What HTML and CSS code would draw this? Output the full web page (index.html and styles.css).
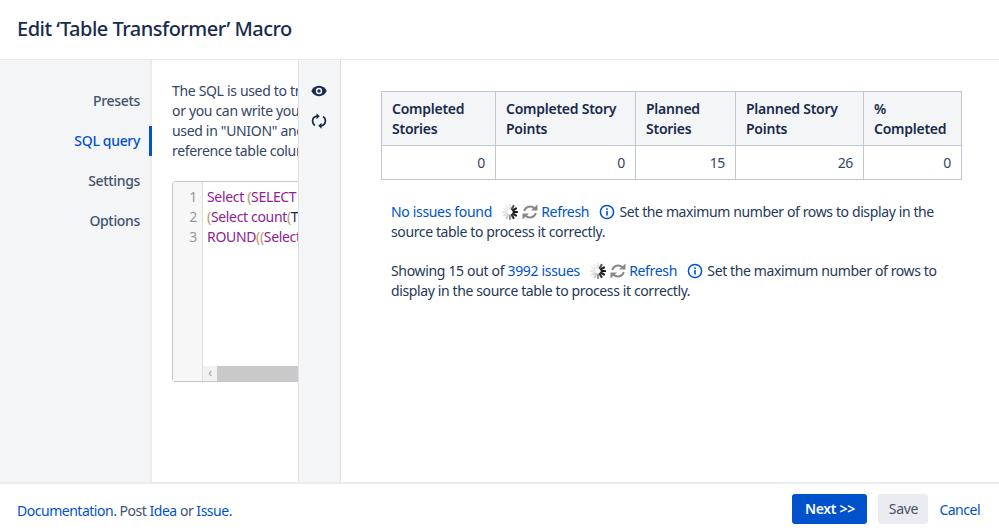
FILE: index.html
```html
<!DOCTYPE html>
<html lang="en">
<head>
<meta charset="utf-8">
<title>Edit Table Transformer Macro</title>
<link rel="stylesheet" href="styles.css">
</head>
<body>
<svg class="defs" width="0" height="0" aria-hidden="true">
  <symbol id="spin" viewBox="0 0 16 16">
    <g stroke-width="2.200" stroke-linecap="round" fill="none">
      <path d="M8 1v3.400" stroke="#e6e6e6"/>
      <path d="M11.500 2l-1.700 3" stroke="#555"/>
      <path d="M14 4.500l-3 1.700" stroke="#222"/>
      <path d="M15 8h-3.400" stroke="#111"/>
      <path d="M14 11.500l-3-1.700" stroke="#222"/>
      <path d="M11.500 14l-1.700-3" stroke="#333"/>
      <path d="M8 15v-3.400" stroke="#999"/>
      <path d="M4.500 14l1.700-3" stroke="#ccc"/>
      <path d="M2 11.500l3-1.700" stroke="#ddd"/>
      <path d="M1 8h3.400" stroke="#e6e6e6"/>
      <path d="M2 4.500l3 1.700" stroke="#eaeaea"/>
      <path d="M4.500 2l1.700 3" stroke="#eee"/>
    </g>
  </symbol>
  <symbol id="refresh" viewBox="0 0 16 16">
    <g fill="none" stroke="#888" stroke-width="2">
      <path d="M12.500 4.500A6 6 0 0 0 2.200 7"/>
      <path d="M3.500 11.500A6 6 0 0 0 13.800 9"/>
    </g>
    <path d="M9 6.500h6.500V0.500z" fill="#888"/>
    <path d="M7 9.500H0.500v6z" fill="#888"/>
  </symbol>
  <symbol id="info" viewBox="0 0 16 16">
    <circle cx="8" cy="8" r="6.600" fill="none" stroke="#0052cc" stroke-width="1.500"/>
    <rect x="7.200" y="7" width="1.600" height="4.600" fill="#0052cc"/>
    <rect x="7.200" y="4.300" width="1.600" height="1.600" fill="#0052cc"/>
  </symbol>
</svg>
<header class="top"><h1 class="title">Edit ‘Table Transformer’ Macro</h1></header>
<div class="middle">
  <nav class="side">
    <a class="tab">Presets</a>
    <a class="tab active">SQL query</a>
    <a class="tab">Settings</a>
    <a class="tab">Options</a>
  </nav>
  <section class="editor">
    <div class="desc">
      <div>The SQL is used to transform the source tables,</div>
      <div>or you can write your own query. Columns must be</div>
      <div>used in "UNION" and other statements. You can</div>
      <div>reference table columns by name.</div>
    </div>
    <div class="code">
      <div class="gutter"><div>1</div><div>2</div><div>3</div></div>
      <div class="lines">
        <div class="ln"><span class="kw">Select</span> <span class="br">(</span><span class="kw">SELECT count(T1.'Key')</span></div>
        <div class="ln"><span class="br">(</span><span class="kw">Select count</span><span class="br">(</span><span class="tx">T1.'Story Points')</span></div>
        <div class="ln"><span class="kw">ROUND</span><span class="br">((</span><span class="kw">Select count</span></div>
      </div>
      <div class="hscroll"><span class="arrow">‹</span><span class="thumb"></span></div>
    </div>
  </section>
  <aside class="tools">
    <svg class="tool" width="16" height="12" viewBox="0 0 16 12"><path d="M8 .8C4.500.8 1.600 3 .3 6c1.300 3 4.200 5.200 7.700 5.200s6.400-2.200 7.700-5.200C14.400 3 11.500.8 8 .8z" fill="#172b4d"/><circle cx="8" cy="6" r="3.200" fill="#f4f5f7"/><circle cx="8" cy="6" r="1.700" fill="#172b4d"/></svg>
    <svg class="tool" width="16" height="16" viewBox="0 0 16 16"><g fill="none" stroke="#172b4d" stroke-width="1.700"><path d="M6 3.200C3.500 3.600 1.600 5.700 1.600 8.200c0 1.800.9 3.300 2.300 4.300"/><path d="M10 12.800c2.500-.4 4.400-2.500 4.400-5 0-1.800-.9-3.300-2.300-4.300"/></g><path d="M5.500 0.300l3.300 3-3.300 2.900zM10.500 9.800l-3.300 3 3.300 2.900z" fill="#172b4d"/></svg>
  </aside>
  <main class="preview">
    <table class="result">
      <colgroup><col class="c1"><col class="c2"><col class="c3"><col class="c4"><col class="c5"></colgroup>
      <thead><tr><th>Completed Stories</th><th>Completed Story Points</th><th>Planned Stories</th><th>Planned Story Points</th><th>% Completed</th></tr></thead>
      <tbody><tr><td>0</td><td>0</td><td>15</td><td>26</td><td>0</td></tr></tbody>
    </table>
    <p class="note"><a>No issues found</a><svg class="ic first"><use href="#spin"/></svg><svg class="ic"><use href="#refresh"/></svg> <a>Refresh</a><svg class="ic inf"><use href="#info"/></svg> <span class="msg">Set the maximum number of rows to display in the source table to process it correctly.</span></p>
    <p class="note">Showing 15 out of <a>3992 issues</a><svg class="ic first"><use href="#spin"/></svg><svg class="ic"><use href="#refresh"/></svg> <a>Refresh</a><svg class="ic inf"><use href="#info"/></svg> <span class="msg">Set the maximum number of rows to display in the source table to process it correctly.</span></p>
  </main>
</div>
<footer class="bottom">
  <div class="links"><a>Documentation.</a> Post <a>Idea</a> or <a>Issue.</a></div>
  <div class="actions">
    <button class="btn primary">Next &gt;&gt;</button>
    <button class="btn">Save</button>
    <a class="cancel">Cancel</a>
  </div>
</footer>
</body>
</html>
```
FILE: styles.css
```css
* { box-sizing: border-box; }
html, body { margin: 0; height: 100%; }
body {
  display: flex;
  flex-direction: column;
  height: 531px;
  overflow: hidden;
  background: #fff;
  color: #172b4d;
  font: 14px/20px "Noto Sans", sans-serif;
  letter-spacing: -0.33px;
}
a { color: #0052cc; }
.defs { position: absolute; }
.top {
  height: 60px;
  flex: none;
  padding: 0 17px;
  display: flex;
  align-items: center;
  border-bottom: 1px solid #e8e9ed;
}
.title { margin: 0 0 2px; font-size: 20px; line-height: 28px; font-weight: 500; letter-spacing: -0.5px; }
.middle { flex: 1; display: flex; min-height: 0; }
.side {
  width: 152px;
  flex: none;
  background: #f4f5f7;
  border-right: 2px solid #ebecf0;
  padding-top: 21px;
  display: flex;
  flex-direction: column;
}
.tab {
  height: 40px;
  line-height: 40px;
  padding-right: 10px;
  text-align: right;
  color: #42526e;
  font-weight: 500;
  position: relative;
}
.tab.active { color: #0052cc; }
.tab.active::after {
  content: "";
  position: absolute;
  right: -2px;
  top: 5px;
  width: 3px;
  height: 30px;
  background: #0052cc;
}
.editor {
  width: 146px;
  flex: none;
  overflow: hidden;
  padding: 21px 0 0 20px;
  color: #344563;
}
.desc { width: 330px; white-space: nowrap; }
.code {
  margin-top: 20px;
  width: 330px;
  height: 201px;
  border: 1px solid #c1c7d0;
  border-radius: 3px;
  position: relative;
  display: flex;
  padding-top: 5px;
}
.gutter {
  position: absolute;
  left: 0;
  top: 0;
  bottom: 0;
  width: 30px;
  padding: 5px 5px 0 0;
  text-align: right;
  background: #f7f7f7;
  border-right: 1px solid #ddd;
  color: #999;
}
.lines { margin-left: 34px; white-space: nowrap; }
.ln { height: 20px; }
.kw { color: #91228f; }
.br { color: #b59a6a; }
.tx { color: #172b4d; }
.hscroll {
  position: absolute;
  left: 30px;
  right: 0;
  bottom: 0;
  height: 15px;
  background: #f1f1f1;
  display: flex;
}
.arrow { width: 14px; font-size: 12px; line-height: 14px; color: #999; text-align: center; }
.thumb { flex: 1; background: #c9c9c9; }
.tools {
  width: 43px;
  flex: none;
  background: #f4f5f7;
  border-left: 1px solid #dfe1e6;
  border-right: 1px solid #dfe1e6;
  display: flex;
  flex-direction: column;
  align-items: center;
  padding: 25px 1px 0 0;
  gap: 16px;
}
.preview { flex: 1; padding: 31px 37px 0 40px; min-width: 0; color: #172b4d; }
.result { width: 580px; border-collapse: collapse; table-layout: fixed; margin-bottom: 22px; }
.c1 { width: 114px; }
.c2 { width: 140px; }
.c3 { width: 100px; }
.c4 { width: 128px; }
.c5 { width: 98px; }
.result th, .result td { border: 1px solid #c1c7d0; padding: 6px 10px; }
.result th { background: #f4f5f7; text-align: left; font-weight: 600; height: 53px; padding-top: 7px; letter-spacing: -0.25px; }
.result td { text-align: right; height: 34px; color: #344563; }
.note { margin: 0 10px 19px; color: #253858; }
.note a { color: #0052cc; }
.msg { letter-spacing: -0.38px; }
.ic { width: 16px; height: 16px; vertical-align: -3px; margin-left: 4px; }
.ic.first { margin-left: 10px; }
.ic.inf { margin-left: 10px; margin-right: 1px; }
.bottom {
  height: 49px;
  flex: none;
  border-top: 2px solid #ebecf0;
  display: flex;
  justify-content: space-between;
  align-items: center;
  padding: 3px 19px 0 17px;
  color: #42526e;
}
.links { margin-top: 3px; letter-spacing: -0.48px; }
.actions { display: flex; align-items: center; gap: 11px; }
.cancel { margin-top: 1px; letter-spacing: -0.5px; }
.btn {
  height: 30px;
  width: 50px;
  border: 0;
  border-radius: 3px;
  background: #ebecf0;
  color: #42526e;
  font: inherit;
  letter-spacing: inherit;
  padding: 0;
}
.btn.primary { width: 75px; background: #0052cc; color: #fff; font-weight: 600; }
```
